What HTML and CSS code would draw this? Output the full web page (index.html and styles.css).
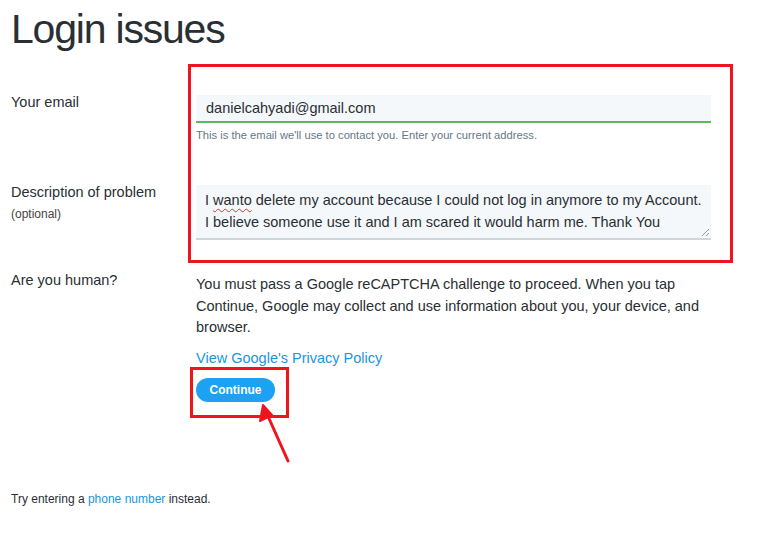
FILE: index.html
```html
<!DOCTYPE html>
<html lang="en">
<head>
    <meta charset="UTF-8">
    <meta name="viewport" content="width=device-width, initial-scale=1.0">
    <title>Login issues</title>
    <link rel="stylesheet" href="styles.css">
</head>
<body>
    <div class="page">
        <h1 class="title">Login issues</h1>

        <form class="issue-form">
            <!-- Email -->
            <div class="row row-email">
                <div class="label">Your email</div>
                <div class="field">
                    <div class="input">danielcahyadi@gmail.com</div>
                    <div class="help">This is the email we'll use to contact you. Enter your current address.</div>
                </div>
            </div>

            <!-- Description -->
            <div class="row row-desc">
                <div class="label">
                    Description of problem
                    <span class="optional">(optional)</span>
                </div>
                <div class="field">
                    <div class="textarea">
                        I <span class="misspelled">wanto</span> delete my account because I could not log in anymore to my Account.<br>
                        I believe someone use it and I am scared it would harm me. Thank You
                        <svg class="grip" width="8" height="8" viewBox="0 0 8 8">
                            <path d="M1 8 L8 1 M5 8 L8 5" stroke="#999" stroke-width="1" fill="none"/>
                        </svg>
                    </div>
                </div>
            </div>

            <!-- Captcha -->
            <div class="row row-human">
                <div class="label">Are you human?</div>
                <div class="field">
                    <p class="captcha-text">You must pass a Google reCAPTCHA challenge to proceed. When you tap Continue, Google may collect and use information about you, your device, and browser.</p>
                    <a class="link policy" href="#">View Google's Privacy Policy</a>
                    <button type="button" class="btn">Continue</button>
                </div>
            </div>
        </form>

        <p class="footer">Try entering a <a class="link" href="#">phone number</a> instead.</p>

        <!-- anotaciones en rojo -->
        <div class="mark mark-fields"></div>
        <div class="mark mark-button"></div>
        <svg class="arrow" width="759" height="534" viewBox="0 0 759 534">
            <line x1="288" y1="461" x2="267" y2="414" stroke="#f0141e" stroke-width="3" stroke-linecap="round"/>
            <path d="M263 405 L260 421 L272 415 Z" fill="#f0141e" stroke="#f0141e" stroke-width="2" stroke-linejoin="round"/>
        </svg>
    </div>
</body>
</html>
```

FILE: styles.css
```css
body {
    margin: 0;
    padding: 0;
    background-color: #fff;
    font-family: "Liberation Sans", Arial, sans-serif;
    color: #292f33;
}
.page {
    position: relative;
    width: 759px;
    height: 534px;
    padding-left: 11px;
    box-sizing: border-box;
    overflow: hidden;
}
.title {
    margin: 9px 0 0;
    font-size: 41px;
    line-height: 41px;
    font-weight: normal;
    letter-spacing: -1.2px;
    color: #292f33;
}
.row {
    display: flex;
}
.label {
    width: 185px;
    flex-shrink: 0;
    font-size: 14.5px;
    line-height: 20px;
}
.field {
    width: 515px;
    padding-top: 3px;
}
.row-email {
    margin-top: 42px;
}
.row-desc {
    margin-top: 40px;
}
.row-human {
    margin-top: 30px;
}
.input {
    height: 26px;
    line-height: 26px;
    padding-left: 10px;
    background-color: #f5f8fa;
    border-bottom: 2px solid #5cb85c;
    font-size: 14.5px;
}
.help {
    margin-top: 5px;
    font-size: 11.2px;
    line-height: 14px;
    color: #657786;
}
.optional {
    display: block;
    margin-top: 2px;
    font-size: 12px;
    color: #444;
}
.textarea {
    position: relative;
    height: 49px;
    padding: 4px 0 0 9px;
    background-color: #f5f8fa;
    border-bottom: 2px solid #ccd6dd;
    font-size: 14.5px;
    line-height: 22px;
    white-space: nowrap;
}
.misspelled {
    text-decoration: underline wavy #e0312f;
    text-decoration-thickness: 1px;
    text-underline-offset: 3px;
}
.grip {
    position: absolute;
    right: 2px;
    bottom: 2px;
}
.captcha-text {
    margin: 1px 0 0;
    font-size: 14.5px;
    line-height: 21.5px;
}
.link {
    color: #1b95e0;
    text-decoration: none;
}
.policy {
    display: block;
    margin-top: 9px;
    font-size: 14.5px;
    line-height: 21.5px;
}
.btn {
    display: block;
    margin-top: 9px;
    width: 79px;
    height: 24px;
    padding: 0;
    border: none;
    border-radius: 12px;
    background-color: #1da1f2;
    color: #fff;
    font-family: "Liberation Sans", Arial, sans-serif;
    font-size: 12px;
    font-weight: bold;
    cursor: pointer;
}
.footer {
    position: absolute;
    left: 11px;
    top: 491px;
    margin: 0;
    font-size: 12px;
    line-height: 16px;
}
.mark {
    position: absolute;
    border: 3px solid #f0141e;
    box-sizing: border-box;
}
.mark-fields {
    left: 188px;
    top: 64px;
    width: 545px;
    height: 199px;
}
.mark-button {
    left: 190px;
    top: 367px;
    width: 99px;
    height: 51px;
}
.arrow {
    position: absolute;
    left: 0;
    top: 0;
    pointer-events: none;
}
```
